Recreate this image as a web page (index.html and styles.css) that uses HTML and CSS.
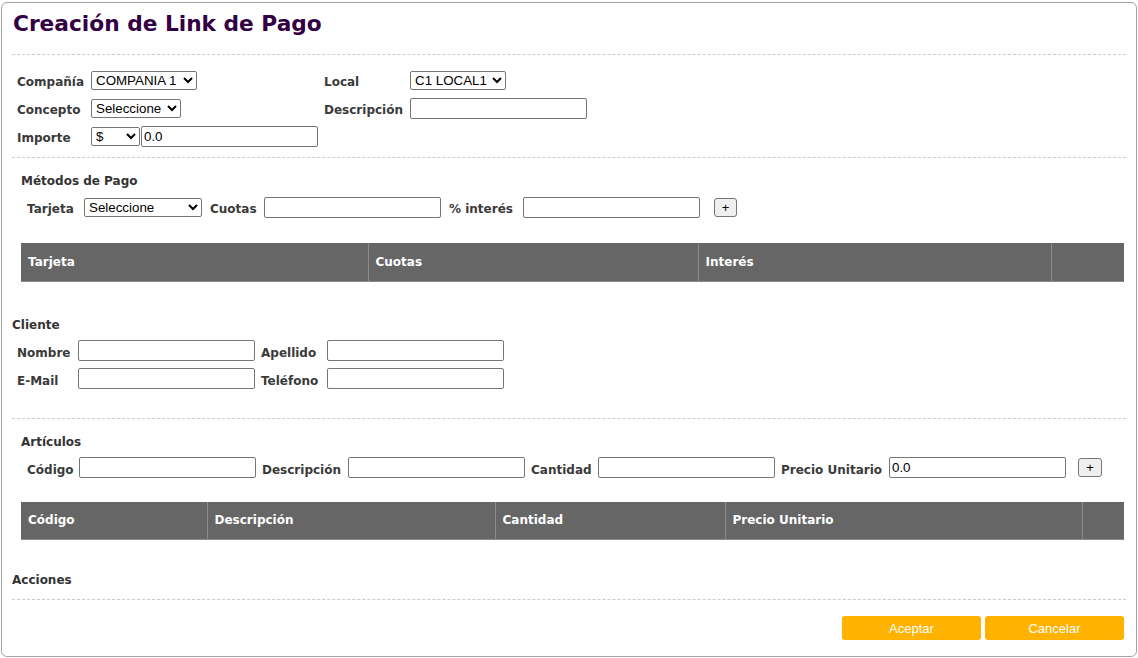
FILE: index.html
```html
<!DOCTYPE html>
<html lang="es">
<head>
<meta charset="utf-8">
<title>Creación de Link de Pago</title>
<link rel="stylesheet" href="styles.css">
</head>
<body>
<div class="card">
  <h1 class="title">Creación de Link de Pago</h1>
  <div class="sep"></div>

  <div class="general">
    <div class="grow">
      <span class="lbl w74">Compañía</span>
      <div class="cell233"><select class="sel w106"><option>COMPANIA 1</option></select></div>
      <span class="lbl w86">Local</span>
      <select class="sel w96"><option>C1 LOCAL1</option></select>
    </div>
    <div class="grow">
      <span class="lbl w74">Concepto</span>
      <div class="cell233"><select class="sel w90"><option>Seleccione</option></select></div>
      <span class="lbl w86">Descripción</span>
      <input class="txt" type="text">
    </div>
    <div class="grow">
      <span class="lbl w74">Importe</span>
      <div class="cell233"><select class="sel w49"><option>$</option></select><input class="txt" type="text" value="0.0"></div>
    </div>
  </div>
  <div class="sep sep-a"></div>

  <div class="section pagos">
    <div class="shead">Métodos de Pago</div>
    <div class="irow">
      <span class="lbl w57">Tarjeta</span>
      <select class="sel w118"><option>Seleccione</option></select>
      <span class="lbl w54 ml8">Cuotas</span>
      <input class="txt" type="text">
      <span class="lbl w74 ml8">% interés</span>
      <input class="txt" type="text">
      <button class="plus ml14" type="button">+</button>
    </div>
    <table class="grid">
      <thead><tr><th class="c347">Tarjeta</th><th class="c330">Cuotas</th><th class="c353">Interés</th><th class="c73"></th></tr></thead>
    </table>
  </div>

  <div class="cliente">
    <div class="shead">Cliente</div>
    <div class="crows">
      <div class="crow">
        <span class="lbl w61">Nombre</span>
        <input class="txt" type="text">
        <span class="lbl w66 ml6">Apellido</span>
        <input class="txt" type="text">
      </div>
      <div class="crow">
        <span class="lbl w61">E-Mail</span>
        <input class="txt" type="text">
        <span class="lbl w66 ml6">Teléfono</span>
        <input class="txt" type="text">
      </div>
    </div>
  </div>
  <div class="sep sep-b"></div>

  <div class="section articulos">
    <div class="shead">Artículos</div>
    <div class="irow">
      <span class="lbl w52">Código</span>
      <input class="txt" type="text">
      <span class="lbl w86 ml6">Descripción</span>
      <input class="txt" type="text">
      <span class="lbl w67 ml6">Cantidad</span>
      <input class="txt" type="text">
      <span class="lbl w108 ml6">Precio Unitario</span>
      <input class="txt" type="text" value="0.0">
      <button class="plus w24 ml12" type="button">+</button>
    </div>
    <table class="grid grid-b">
      <thead><tr><th class="c186">Código</th><th class="c288">Descripción</th><th class="c230">Cantidad</th><th class="c357">Precio Unitario</th><th class="c42"></th></tr></thead>
    </table>
  </div>

  <div class="acciones">
    <div class="shead">Acciones</div>
  </div>
  <div class="sep sep-c"></div>
  <div class="actions">
    <button class="btn" type="button">Aceptar</button>
    <button class="btn" type="button">Cancelar</button>
  </div>
</div>
</body>
</html>
```

FILE: styles.css
```css
html, body {
  margin: 0;
  padding: 0;
  background: #ffffff;
}
body {
  font-family: "DejaVu Sans", Verdana, sans-serif;
  color: #3a3a3a;
}
.card {
  box-sizing: border-box;
  margin: 2px 1px 0 1px;
  width: 1136px;
  height: 655px;
  border: 1px solid #a3a3a3;
  border-radius: 6px;
  padding: 0 10px 0 10px;
}
.title {
  margin: 7px 0 0 1px;
  font-size: 21.7px;
  line-height: 28px;
  font-weight: bold;
  color: #330044;
}
.sep {
  border-top: 1px dashed #cccccc;
  margin-top: 16px;
  height: 0;
}
.sep-a { margin-top: 7px; }
.sep-b { margin-top: 25px; }
.sep-c { margin-top: 11px; }

.lbl {
  font-size: 12px;
  font-weight: bold;
  color: #3a3a3a;
  white-space: nowrap;
  flex: none;
  padding-top: 4px;
}
.w52 { width: 52px; }
.w54 { width: 54px; }
.w57 { width: 57px; }
.w61 { width: 61px; }
.w66 { width: 66px; }
.w67 { width: 67px; }
.w74 { width: 74px; }
.w86 { width: 86px; }
.w108 { width: 108px; }

.txt {
  box-sizing: border-box;
  width: 177px;
  height: 21px;
  margin: 0;
  padding: 1px 2px;
  border: 1px solid #767676;
  border-radius: 2px;
  font-family: "Liberation Sans", Arial, sans-serif;
  font-size: 13.33px;
  color: #000;
  background: #fff;
  flex: none;
}
.sel {
  box-sizing: border-box;
  height: 19px;
  margin: 0;
  padding: 0;
  border: 1px solid #767676;
  border-radius: 2px;
  font-family: "Liberation Sans", Arial, sans-serif;
  font-size: 13.33px;
  color: #000;
  background: #fff;
  flex: none;
}
.w49 { width: 49px; }
.w90 { width: 90px; }
.w96 { width: 96px; }
.w106 { width: 106px; }
.w118 { width: 118px; }

.plus {
  box-sizing: border-box;
  width: 23px;
  height: 19px;
  margin: 0;
  padding: 0;
  border: 1px solid #767676;
  border-radius: 3px;
  background: #efefef;
  font-family: "Liberation Sans", Arial, sans-serif;
  font-size: 13px;
  color: #000;
  flex: none;
}
.plus.w24 { width: 24px; }

.ml6 { margin-left: 6px; }
.ml8 { margin-left: 8px; }
.plus.ml12 { margin-left: 12px; }
.plus.ml14 { margin-left: 14px; }

.general {
  padding: 11px 0 0 5px;
}
.grow {
  display: flex;
  align-items: center;
  height: 28px;
}
.cell233 {
  width: 233px;
  display: flex;
  align-items: center;
  flex: none;
}
.cell233 .txt { margin-left: 1px; }

.section { padding-left: 9px; }
.shead {
  font-size: 12px;
  font-weight: bold;
  line-height: 16px;
  color: #333333;
}
.pagos { padding-top: 15px; }
.irow {
  display: flex;
  align-items: center;
  height: 28px;
  margin-top: 4px;
  padding-left: 6px;
}
.grid {
  border-collapse: collapse;
  margin-top: 22px;
  width: 1103px;
  table-layout: fixed;
}
.grid th {
  background: #666666;
  color: #ffffff;
  font-size: 12px;
  font-weight: bold;
  text-align: left;
  height: 38px;
  padding: 0 0 0 7px;
  box-sizing: border-box;
  border-left: 1px solid #8a8a8a;
  border-bottom: 1px solid #8a8a8a;
}
.grid th:first-child { border-left: 0; }
.grid-b { margin-top: 20px; }
.c347 { width: 347px; }
.c330 { width: 330px; }
.c353 { width: 353px; }
.c73 { width: 73px; }
.c186 { width: 186px; }
.c288 { width: 288px; }
.c230 { width: 230px; }
.c357 { width: 357px; }
.c42 { width: 42px; }

.cliente { padding-top: 35px; }
.crows { padding-top: 4px; }
.crow {
  display: flex;
  align-items: center;
  height: 28px;
  padding-left: 5px;
}

.articulos { padding-top: 15px; }
.acciones { padding-top: 32px; }

.actions {
  display: flex;
  justify-content: flex-end;
  gap: 4px;
  margin-top: 16px;
  padding-right: 2px;
}
.btn {
  width: 139px;
  height: 24px;
  margin: 0;
  padding: 0;
  border: 0;
  border-radius: 3px;
  background: #ffb300;
  color: #ffffff;
  font-family: "Liberation Sans", Arial, sans-serif;
  font-size: 13px;
}
```
